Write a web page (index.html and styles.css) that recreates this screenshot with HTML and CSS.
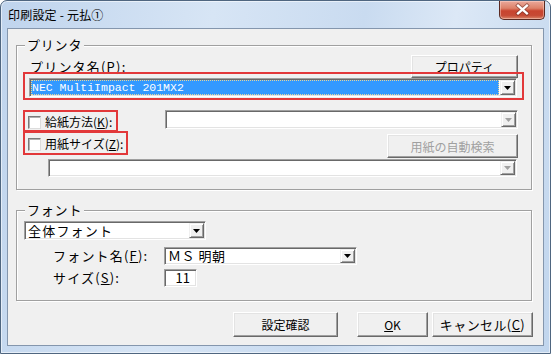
FILE: index.html
```html
<!DOCTYPE html>
<html lang="ja">
<head>
    <meta charset="UTF-8">
    <title>印刷設定 - 元払①</title>
    <link rel="stylesheet" href="styles.css">
</head>
<body>
    <div class="window">
        <div class="titlebar">
            <span class="title">印刷設定 - 元払①</span>
            <button class="close" aria-label="閉じる">
                <svg width="46" height="19" viewBox="0 0 46 19">
                    <path d="M19.5 5.5 L28.5 13.5 M28.5 5.5 L19.5 13.5" stroke="#6a2c24" stroke-width="4.2" stroke-linecap="square" opacity="0.55"/>
                    <path d="M19.5 5.5 L28.5 13.5 M28.5 5.5 L19.5 13.5" stroke="#fff" stroke-width="2.4" stroke-linecap="square"/>
                </svg>
            </button>
        </div>

        <div class="client">
            <!-- プリンタ -->
            <div class="group group-printer">
                <span class="group-title mono">プリンタ</span>
                <div class="name-row">
                    <span class="label mono">プリンタ名(<u>P</u>):</span>
                    <button class="btn btn-prop">プロパティ</button>
                </div>
                <div class="mark mark-combo">
                    <div class="combo">
                        <div class="combo-field selected">NEC MultiImpact 201MX2</div>
                        <span class="drop">
                            <svg width="7" height="4" viewBox="0 0 7 4"><polygon points="0,0 7,0 3.5,4" fill="#000"/></svg>
                        </span>
                    </div>
                </div>
                <div class="feed-row">
                    <label class="mark mark-check mark-feed">
                        <span class="check"></span>
                        <span class="check-text">給紙方法(<u>K</u>):</span>
                    </label>
                    <div class="combo combo-feed disabled">
                        <div class="combo-field"></div>
                        <span class="drop">
                            <svg width="7" height="4" viewBox="0 0 7 4"><polygon points="0,0 7,0 3.5,4" fill="#a0a0a0"/></svg>
                        </span>
                    </div>
                </div>
                <div class="size-row">
                    <label class="mark mark-check mark-size">
                        <span class="check"></span>
                        <span class="check-text">用紙サイズ(<u>Z</u>):</span>
                    </label>
                    <button class="btn btn-auto" disabled>用紙の自動検索</button>
                </div>
                <div class="combo combo-size disabled">
                    <div class="combo-field"></div>
                    <span class="drop">
                        <svg width="7" height="4" viewBox="0 0 7 4"><polygon points="0,0 7,0 3.5,4" fill="#a0a0a0"/></svg>
                    </span>
                </div>
            </div>

            <!-- フォント -->
            <div class="group group-font">
                <span class="group-title mono">フォント</span>
                <div class="combo combo-scope">
                    <div class="combo-field mono">全体フォント</div>
                    <span class="drop">
                        <svg width="7" height="4" viewBox="0 0 7 4"><polygon points="0,0 7,0 3.5,4" fill="#000"/></svg>
                    </span>
                </div>
                <div class="field-row">
                    <span class="field-label mono">フォント名(<u>F</u>):</span>
                    <div class="combo combo-font">
                        <div class="combo-field font-name">ＭＳ 明朝</div>
                        <span class="drop">
                            <svg width="7" height="4" viewBox="0 0 7 4"><polygon points="0,0 7,0 3.5,4" fill="#000"/></svg>
                        </span>
                    </div>
                </div>
                <div class="field-row field-row-size">
                    <span class="field-label mono">サイズ(<u>S</u>):</span>
                    <div class="textbox">11</div>
                </div>
            </div>

            <div class="buttons">
                <button class="btn btn-check">設定確認</button>
                <button class="btn btn-ok"><u>O</u>K</button>
                <button class="btn btn-cancel">キャンセル(<u>C</u>)</button>
            </div>
        </div>
    </div>
</body>
</html>
```

FILE: styles.css
```css
* {
    margin: 0;
    padding: 0;
    box-sizing: border-box;
}

body {
    width: 551px;
    height: 354px;
    overflow: hidden;
    font-family: "Noto Sans CJK JP", "Liberation Sans", sans-serif;
    font-size: 12px;
    color: #000;
    background: #fff;
}

u {
    text-decoration: underline;
    text-underline-offset: 1px;
}

.mono {
    font-size: 13px;
    letter-spacing: 1.2px;
}

/* window frame */
.window {
    height: 354px;
    display: flex;
    flex-direction: column;
    padding: 0 6px 7px;
    border: 1px solid #4f6680;
    border-radius: 7px 7px 0 0;
    background: linear-gradient(100deg, #bfd4ed 0%, #d7e5f5 35%, #c9dbf0 60%, #dce8f6 75%, #c0d5ed 100%);
    box-shadow: inset 0 0 0 1px rgba(255, 255, 255, 0.55);
}

.titlebar {
    height: 27px;
    display: flex;
    justify-content: space-between;
    align-items: flex-start;
}

.title {
    margin: 6px 0 0 1px;
    line-height: 16px;
    font-size: 12px;
    letter-spacing: 0.2px;
}

.close {
    width: 46px;
    height: 19px;
    margin-right: -1px;
    border: 1px solid #5b2a22;
    border-top: none;
    border-radius: 0 0 5px 5px;
    background: linear-gradient(#eaa99b 0%, #dd8169 40%, #c8442f 55%, #c64a35 80%, #d98468 100%);
    box-shadow: inset 0 0 0 1px rgba(255, 220, 210, 0.45);
    display: flex;
}

.close svg {
    margin: -1px 0 0 -1px;
}

.client {
    flex: 1;
    background: #f0f0f0;
    border: 1px solid #8496ad;
    padding: 16px 10px 0 8px;
}

/* group boxes */
.group {
    position: relative;
    width: 516px;
    border: 1px solid #a0a0a0;
    box-shadow: inset 1px 1px 0 #fff, 1px 1px 0 #fff;
}

.group-title {
    position: absolute;
    top: -9px;
    left: 8px;
    padding: 0 2px;
    line-height: 16px;
    letter-spacing: 0.8px;
    background: #f0f0f0;
}

.group-printer {
    padding: 9px 7px 12px 6px;
}

.group-font {
    margin-top: 20px;
    padding: 10px 7px 13px 7px;
}

/* 3d controls */
.btn {
    height: 25px;
    font-family: inherit;
    font-size: 12px;
    color: #000;
    background: #f0f0f0;
    border: 1px solid;
    border-color: #fff #696969 #696969 #fff;
    box-shadow: inset -1px -1px 0 #a0a0a0, inset 1px 1px 0 #e3e3e3;
}

.btn:disabled {
    color: #a0a0a0;
}

.combo {
    display: flex;
    height: 19px;
    padding: 1px;
    background: #fff;
    border: 1px solid;
    border-color: #a0a0a0 #fff #fff #a0a0a0;
    box-shadow: inset 1px 1px 0 #696969, inset -1px -1px 0 #e3e3e3;
}

.combo-field {
    flex: 1;
    display: flex;
    align-items: center;
    padding-left: 2px;
    white-space: nowrap;
    line-height: 14px;
}

.combo-field.selected {
    margin-right: 1px;
    padding-left: 1px;
    background: #3399ff;
    color: #fff;
    font-family: "Liberation Mono", monospace;
    font-size: 11.5px;
    outline: 1px dotted #e4d49a;
    outline-offset: -1px;
}

.font-name {
    font-size: 13px;
    letter-spacing: 0.5px;
}

.drop {
    width: 15px;
    display: flex;
    align-items: center;
    justify-content: center;
    background: #f0f0f0;
    border: 1px solid;
    border-color: #f0f0f0 #696969 #696969 #f0f0f0;
    box-shadow: inset 1px 1px 0 #fff, inset -1px -1px 0 #a0a0a0;
}

.check {
    width: 13px;
    height: 13px;
    flex-shrink: 0;
    background: #fff;
    border: 1px solid;
    border-color: #7a7a7a #dcdcdc #dcdcdc #7a7a7a;
    box-shadow: inset 1px 1px 0 #b0b0b0;
}

.check-text {
    white-space: nowrap;
    line-height: 16px;
}

.textbox {
    width: 33px;
    height: 18px;
    padding-right: 6px;
    text-align: right;
    font-size: 13px;
    line-height: 15px;
    background: #fff;
    border: 1px solid;
    border-color: #a0a0a0 #fff #fff #a0a0a0;
    box-shadow: inset 1px 1px 0 #696969, inset -1px -1px 0 #e3e3e3;
}

/* red highlight marks */
.mark {
    border: 2px solid #e2383a;
}

/* printer group */
.name-row {
    display: flex;
    justify-content: space-between;
    align-items: center;
    height: 23px;
}

.name-row .label {
    margin-left: 7px;
}

.btn-prop {
    width: 107px;
    height: 23px;
    margin-right: 6px;
}

.mark-combo {
    position: relative;
    margin-top: -6px;
    padding: 4px 5px 1px 4px;
}

.feed-row {
    display: flex;
    margin-top: 10px;
}

.mark-check {
    display: flex;
    align-items: center;
    gap: 4px;
    padding: 2px 0 0 3px;
}

.mark-feed {
    width: 95px;
    height: 22px;
}

.mark-size {
    width: 105px;
    height: 24px;
}

.combo-feed {
    width: 353px;
    margin-left: 47px;
}

.size-row {
    display: flex;
    align-items: flex-start;
    margin-top: -1px;
}

.btn-auto {
    width: 131px;
    height: 24px;
    margin: 3px 6px 0 auto;
}

.combo-size {
    width: 469px;
    height: 18px;
    margin: 1px 0 0 25px;
}

/* font group */
.combo-scope {
    width: 182px;
}

.field-row {
    display: flex;
    align-items: center;
    margin-top: 6px;
}

.field-row-size {
    margin-top: 3px;
}

.field-label {
    width: 111px;
    margin-left: 29px;
}

.combo-font {
    width: 193px;
    height: 18px;
}

/* bottom buttons */
.buttons {
    display: flex;
    justify-content: flex-end;
    margin-top: 11px;
}

.btn-check {
    width: 105px;
    margin-right: 19px;
}

.btn-ok {
    width: 71px;
    margin-right: 4px;
}

.btn-cancel {
    width: 101px;
    font-size: 13px;
    letter-spacing: 0.4px;
}
```
